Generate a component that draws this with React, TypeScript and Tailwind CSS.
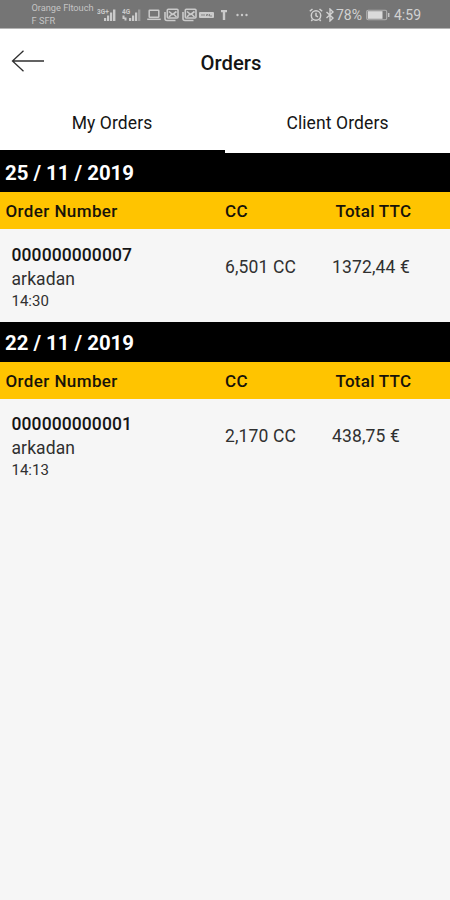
import React from "react";

type Order = { number: string; client: string; time: string; cc: string; total: string };
type Day = { date: string; orders: Order[] };

const days: Day[] = [
  {
    date: "25 / 11 / 2019",
    orders: [{ number: "000000000007", client: "arkadan", time: "14:30", cc: "6,501 CC", total: "1372,44 €" }],
  },
  {
    date: "22 / 11 / 2019",
    orders: [{ number: "000000000001", client: "arkadan", time: "14:13", cc: "2,170 CC", total: "438,75 €" }],
  },
];

function Signal({ label, width }: { label: string; width: number }) {
  return (
    <svg width={width} height="16" viewBox={`0 0 ${width} 16`} fill="#cacaca" className="shrink-0">
      <text x="0" y="6.5" fontSize="6.5" fontWeight="700" fontFamily="Roboto, sans-serif">{label}</text>
      <rect x={width - 13} y="11" width="2.2" height="3" />
      <rect x={width - 10} y="8.5" width="2.2" height="5.5" />
      <rect x={width - 7} y="5.5" width="2.2" height="8.5" />
      <rect x={width - 4} y="2.5" width="2.4" height="11.5" opacity={label === "4G" ? 0.45 : 1} />
      {label === "4G" && <path d="M0.500 8.500h2v2h2v3h-2v-1.500h-2z" />}
    </svg>
  );
}

function MailStack() {
  return (
    <svg width="15" height="14" viewBox="0 0 15 14" fill="none" stroke="#cacaca" strokeWidth="1.600" className="shrink-0">
      <path d="M1 4v6.500a2 2 0 0 0 2 2h8.500" />
      <rect x="3.300" y="1.300" width="10.700" height="8.700" rx="1" />
      <path d="M5 3.500l3.700 3L12.500 3.500M5 9l2.500-2.500M12.500 9L10 6.500" />
    </svg>
  );
}

function StatusBar() {
  return (
    <div className="flex h-[29px] shrink-0 items-center border-b border-[#b4b4b4] bg-[#757575] pt-px text-[#d2d2d2]">
      <div className="ml-[31.500px] w-[65.500px] shrink-0 whitespace-nowrap pb-px text-[9.250px] leading-[13px] text-[#c4c4c4]">
        <div className="tracking-[-0.030px]">Orange Fltouch</div>
        <div>F SFR</div>
      </div>
      <Signal label="3G+" width={20} />
      <div className="w-[5px] shrink-0" />
      <Signal label="4G" width={20} />
      <svg width="14" height="14" viewBox="0 0 14 14" fill="none" stroke="#cacaca" strokeWidth="1.500" className="ml-[4.500px] shrink-0">
        <rect x="2.200" y="2.300" width="9.600" height="7" rx="0.500" />
        <path d="M0.200 11.300h13.600" />
      </svg>
      <div className="ml-[3px] flex gap-[3px]">
        <MailStack />
        <MailStack />
      </div>
      <svg width="15" height="8" viewBox="0 0 15 8" className="ml-[2px] shrink-0">
        <rect y="1" width="15" height="6" rx="1" fill="#cacaca" />
        <path d="M2 4h4M7.500 5V3.500h1.500V5M10.500 3v2h2.500" stroke="#858585" fill="none" />
      </svg>
      <svg width="8" height="12" viewBox="0 0 8 12" className="ml-[6px] shrink-0" fill="#cacaca">
        <path d="M1 1h6v2.300H5.200V11H2.800V3.300H1z" />
      </svg>
      <svg width="12" height="4" viewBox="0 0 12 4" className="ml-[8px] shrink-0" fill="#cacaca">
        <circle cx="1.500" cy="2" r="1.200" />
        <circle cx="6" cy="2" r="1.200" />
        <circle cx="10.500" cy="2" r="1.200" />
      </svg>
      <div className="ml-auto mr-[29px] flex items-center">
        <svg width="14" height="14" viewBox="0 0 14 14" fill="none" stroke="#d2d2d2" strokeWidth="1.500">
          <circle cx="7" cy="7.500" r="4.700" />
          <path d="M7 4.800v3l2 1M0.800 3.300L3.500 1M13.200 3.300L10.500 1M3.500 11.500L2.300 13M10.500 11.500l1.200 1.500" />
        </svg>
        <svg width="10" height="14" viewBox="0 0 10 14" fill="none" stroke="#d2d2d2" strokeWidth="1.400" className="ml-[2px]">
          <path d="M1.500 4l6.500 6-3 3V1l3 3-6.500 6" />
        </svg>
        <span className="ml-[1.500px] text-[14px] leading-none">78%</span>
        <svg width="24" height="12" viewBox="0 0 24 12" fill="none" className="ml-[4px]">
          <rect x="0.700" y="1.200" width="20" height="9.600" rx="1.500" stroke="#b0b0b0" strokeWidth="1.100" />
          <rect x="1.800" y="2.200" width="14.700" height="7.600" fill="#dadada" />
          <path d="M22.700 4v4" stroke="#c5c5c5" strokeWidth="1.500" />
        </svg>
        <span className="ml-[4px] text-[14px] leading-none">4:59</span>
      </div>
    </div>
  );
}

function DaySection({ day }: { day: Day }) {
  return (
    <section>
      <h2 className="flex h-[39.500px] items-center bg-black pl-[5px] pt-[2.500px] text-[20.400px] font-bold leading-none text-white">
        {day.date}
      </h2>
      <div className="flex h-[37px] items-center bg-[#ffc400] pl-[5px] pt-[2px] text-[17px] font-medium leading-none text-[#17130a]">
        <span className="w-[220px] pl-[0.500px] tracking-[0.400px]">Order Number</span>
        <span className="w-[110.500px] tracking-[0.300px]">CC</span>
        <span className="tracking-[0.250px]">Total TTC</span>
      </div>
      {day.orders.map((order) => (
        <div key={order.number} className="flex h-[93px] pl-[11.500px] text-[17.500px] leading-[24px] text-[#303030]">
          <div className="w-[213.500px] pt-[13.500px]">
            <div className="font-medium tracking-[0.100px] text-[#151515]">{order.number}</div>
            <div className="tracking-[0.100px]">{order.client}</div>
            <div className="text-[15px] leading-[20px]">{order.time}</div>
          </div>
          <div className="w-[107px] pt-[25.500px] tracking-[0.150px]">{order.cc}</div>
          <div className="pt-[25.500px] tracking-[0.150px]">{order.total}</div>
        </div>
      ))}
    </section>
  );
}

export default function App() {
  return (
    <div className="flex h-[900px] w-[450px] flex-col overflow-hidden bg-[#f6f6f6] font-['Roboto',sans-serif]">
      <StatusBar />
      <header className="grid h-[66px] shrink-0 grid-cols-[60px_1fr_48px] items-center bg-white">
        <button aria-label="Back" className="pb-[3px] pl-[11px]">
          <svg width="34" height="22" viewBox="0 0 34 22" fill="none" stroke="#303030" strokeWidth="1.300">
            <path d="M33 11H1.500M12.500 0.800L1.500 11l11 10.200" />
          </svg>
        </button>
        <h1 className="pt-[2px] text-center text-[20.250px] font-medium text-[#151515]">Orders</h1>
      </header>
      <nav className="grid h-[57.500px] shrink-0 grid-cols-2 bg-white text-[17.500px] tracking-[0.100px] text-[#151515]">
        <button className="border-b-[3px] border-black pr-px pt-[2px]">My Orders</button>
        <button className="border-b-[3px] border-white pt-[2px]">Client Orders</button>
      </nav>
      <main>
        {days.map((day) => (
          <DaySection key={day.date} day={day} />
        ))}
      </main>
    </div>
  );
}
